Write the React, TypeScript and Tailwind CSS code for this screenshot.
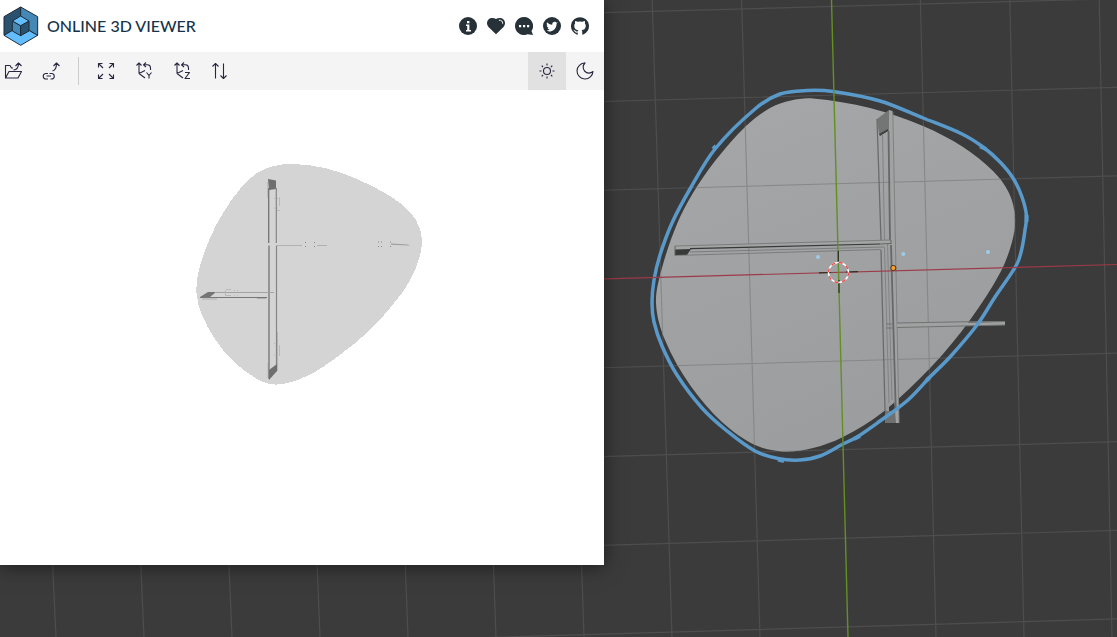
import React from "react";

type Point = [number, number];

/** Closed smooth curve through the given points, with handles scaled to each chord. */
function smooth(points: Point[]): string {
  const n = points.length;
  const at = (i: number) => points[(i + n) % n];
  const tangent = (i: number): Point => {
    const [a, c] = [at(i - 1), at(i + 1)];
    const length = Math.hypot(c[0] - a[0], c[1] - a[1]);
    return [(c[0] - a[0]) / length, (c[1] - a[1]) / length];
  };
  let d = `M${at(0)[0]} ${at(0)[1]}`;
  for (let i = 0; i < n; i++) {
    const [b, c] = [at(i), at(i + 1)];
    const [t, u] = [tangent(i), tangent(i + 1)];
    const h = Math.hypot(c[0] - b[0], c[1] - b[1]) / 3;
    d += `C${b[0] + t[0] * h} ${b[1] + t[1] * h} ${c[0] - u[0] * h} ${c[1] - u[1] * h} ${c[0]} ${c[1]}`;
  }
  return d + "Z";
}

const slab = smooth([
  [813, 98.5], [791, 100.5], [770, 108], [746, 126], [715, 161], [693, 193], [677, 224], [662, 268], [656, 303],
  [665, 340], [690, 385], [722, 422], [755, 445], [784, 451.5], [813, 448], [843, 437], [883, 412], [933, 365],
  [970, 320], [1000, 273], [1012, 242], [1015, 217], [1009, 193], [993, 171], [963, 147], [923, 126], [870, 108],
]);

const outline = smooth([
  [833, 91.5], [807, 90.5], [780, 94], [755, 109], [715, 149], [690, 189], [672, 223], [660, 255], [654, 280],
  [652, 303], [654, 322], [662, 346], [677, 375], [702, 408], [727, 431], [755, 451], [778, 458.5], [800, 460],
  [820, 456], [843, 444], [857, 437], [880, 421], [908, 400], [930, 377], [950, 357], [977, 325], [995, 297],
  [1017, 264], [1022, 248], [1025, 230], [1026.5, 216], [1022, 197], [1013, 178], [1000, 162], [983, 147],
  [962, 134], [923, 118], [880, 101],
]);

const model = smooth([
  [293, 164], [325, 168], [357, 179], [390, 196], [410, 212], [420, 229], [421.5, 247], [415, 270], [402, 293],
  [371, 329], [337, 357], [307, 376], [277, 384.5], [257, 379], [233, 361], [215, 339], [202, 315], [196.5, 293],
  [199, 270], [210, 238], [223, 213], [240, 189], [257, 173], [274, 166],
]);

const columns = [-9, -8, -7, -6, -5, -4, -3, -2, -1, 1, 2, 3];
const rows = [-3, -2, -1, 1, 2, 3, 4];

const gridPath =
  columns.map((i) => `M${831 + i * 89.4} 0L${848 + i * 88} 637`).join("") +
  rows.map((i) => `M0 ${296 + i * 89}L1117 ${264.5 + i * 88.6}`).join("");

function Viewport() {
  return (
    <svg
      className="absolute inset-0 h-full w-full"
      viewBox="0 0 1117 637"
      preserveAspectRatio="xMidYMid slice"
      role="img"
      aria-label="3D viewport"
    >
      <defs>
        <clipPath id="slab-clip">
          <path d={slab} />
        </clipPath>
        <linearGradient id="slab-fill" x1="0" y1="0" x2="0.4" y2="1">
          <stop offset="0" stopColor="#a6a7a8" />
          <stop offset="1" stopColor="#9c9d9e" />
        </linearGradient>
      </defs>
      <rect width="1117" height="637" fill="#3b3b3b" />
      <path d={gridPath} stroke="#4e4e4e" strokeWidth="1.2" fill="none" />
      <path d={slab} fill="url(#slab-fill)" />
      <path d={gridPath} stroke="#868788" strokeWidth="1.1" fill="none" clipPath="url(#slab-clip)" />

      {/* upright frame */}
      <path d="M877 119L889 110V131L879 134Z" fill="#747676" />
      <path d="M879 134L888 129V131L880 136Z" fill="#3d3f3f" />
      <path d="M885 411H897V423H885Z" fill="#6f7171" />
      <path d="M885.5 404L889 401V411H885.5ZM894 398L899 394V423H896Z" fill="#999b9b" />
      <path d="M889 110L892.5 111L899 423H896Z" fill="#a1a3a3" />
      <path d="M888.5 131L890 240M891 245L895.8 410" stroke="#676969" strokeWidth="1.8" fill="none" />
      <path d="M892.8 112L899 423" stroke="#808282" fill="none" />
      <path d="M877 119L881 240M881 250L885 410" stroke="#6a6c6c" strokeWidth="1.3" fill="none" />
      <path d="M882.5 134L884.5 240M884.5 247L889 403M887.5 244L892 400" stroke="#828484" fill="none" />

      {/* left arm */}
      <path d="M675 246L891 240V244L675 249.5Z" fill="#a3a4a4" />
      <path d="M675 249.5L691 249L687 255H675Z" fill="#383939" />
      <path d="M675 246L891 240M675 255.5L881 249.5M690 252L884 247" stroke="#7b7d7d" fill="none" />
      <path d="M690 248.7L880 244" stroke="#373939" strokeWidth="1.2" />
      <path d="M880 244L891 243.5M891 240V244M675 246V255.5" stroke="#636565" fill="none" />

      {/* right arm */}
      <path d="M897 323.5L1005 322V325L897 327.5Z" fill="#a0a1a1" />
      <path d="M897 323L980 321.5H1005M897 327.5L1005 325M886 324H893M886 328H893" stroke="#717373" fill="none" />

      <path d={outline} stroke="#5a9acb" strokeWidth="3.5" fill="none" strokeLinejoin="round" />
      <path
        d="M713 149L716 146M980 146.5L986 149M1026.5 215V222M778 459.5L784 461M854 439L860 436M926 381L930 377"
        stroke="#5a9acb"
        strokeWidth="4"
      />
      <path d="M0 296L1117 264.5" stroke="#9c3a49" strokeWidth="1.2" />
      <path d="M831.5 0L848 637" stroke="#638f25" strokeWidth="1.4" />

      {/* 3D cursor */}
      <path d="M819 272.8L831 272.5M846 272L858 271.6M838.3 251V264M839 280V293" stroke="#28301f" strokeWidth="1.2" />
      <circle cx="838.5" cy="272.5" r="10" fill="none" stroke="#ffffff" strokeWidth="1.4" />
      <circle cx="838.5" cy="272.5" r="10" fill="none" stroke="#f04747" strokeWidth="1.4" strokeDasharray="3.93 3.93" />
      <circle cx="893.3" cy="268" r="2.6" fill="#ffa02b" stroke="#40301a" />
      <g fill="#9ecbe8">
        <circle cx="818" cy="257" r="2" />
        <circle cx="903.3" cy="254" r="2" />
        <circle cx="988" cy="252" r="2" />
      </g>
    </svg>
  );
}

function ModelView() {
  return (
    <svg className="min-h-0 w-full flex-1" viewBox="0 90 604 475" role="img" aria-label="Loaded model">
      <path d={model} fill="#d4d4d4" shapeRendering="crispEdges" />
      <path d="M268 179L276 180.5V189L269 190Z" fill="#6f6f6f" />
      <path d="M267.5 182V198M268 363V378" stroke="#bdbdbd" />
      <path d="M268.7 188V243M269 245.5V379" stroke="#747474" strokeWidth="1.3" />
      <path d="M276.3 188V243M276.5 245.5V367" stroke="#858585" strokeWidth="1.2" />
      <path d="M277.5 332V371" stroke="#aaaaaa" strokeWidth="0.7" />
      <path d="M269 380V370L277 364V371Z" fill="#6f6f6f" />
      <path d="M200 297L208 292H216L210 297Z" fill="#747474" />
      <path d="M216 292.5H274" stroke="#a3a3a3" />
      <path d="M200 297.5H267" stroke="#777777" />
      <path d="M202 299H217M257 298.5H266" stroke="#aeaeae" />
      <path d="M277 245.5H302M317 245.5H327" stroke="#b0b0b0" />
      <path d="M391 243.5L408 244.5L410 245.5L391 244.8Z" fill="#9d9d9d" />
      <g stroke="#b2b2b2" strokeWidth="0.8" fill="none">
        <path d="M279.5 197V206M277 210.5H280M279.5 345V356M225.5 295V290M226 289.5H231M225 295.5H231" />
        <path d="M274 198.5h1M277 198.5h1M274 208h1M277 208h1M274 343.5h1M277 343.5h1M274 355h1M277 355h1" />
        <path d="M234 290.5h1M237 290.5h1M234 295h1M237 295h1" />
      </g>
      <path
        d="M305 242.5h1M314 242.5h1M305 246.5h1M314 246.5h1M378 242h1M381 242h1M390 242h1M378 246.5h1M381 246.5h1M390 246.5h1"
        stroke="#8c8c8c"
        fill="none"
      />
    </svg>
  );
}

function Logo() {
  return (
    <svg className="h-10 w-9 shrink-0" viewBox="9 18 108 120" aria-hidden="true">
      <g stroke="#1d2b38" strokeWidth="3" strokeLinejoin="round">
        <path d="M62 21L12 50V106L62 77Z" fill="#2a526e" />
        <path d="M62 21L113 50V106L62 77Z" fill="#4588b5" />
        <path d="M12 106L62 77L113 106L62 136Z" fill="#63bdff" />
        <path d="M37 63L62 77V107L37 93Z" fill="#4588b5" />
        <path d="M87 63L62 77V107L87 93Z" fill="#2a526e" />
        <path d="M62 48L87 63L62 77L37 63Z" fill="#63bdff" />
      </g>
    </svg>
  );
}

const links = [
  {
    label: "Information",
    art: (
      <>
        <circle cx="9" cy="9" r="9" />
        <path d="M8 4h2.4v2.3H8zM7 7.6h3.4v5.4H12v1.4H7V13h1.2V9H7z" fill="#fff" />
      </>
    ),
  },
  {
    label: "Donate",
    art: (
      <>
        <path d="M9 17.3L1.5 9.9C-.5 7.7-.5 4.4 1.5 2.4 3.6.4 7 .7 9 2 11 .7 14.4.4 16.5 2.4c2 2 2 5.3 0 7.5z" />
        <path d="M12.3 3.2c2-.4 3.5 1.1 3.4 3.1" fill="none" stroke="#fff" strokeWidth="1" strokeLinecap="round" />
      </>
    ),
  },
  {
    label: "Feedback",
    art: (
      <>
        <path d="M9 0a9 9 0 1 0 3.5 17.3L18 18l-1.5-4A9 9 0 0 0 9 0z" />
        <path d="M4 8h2.2v2.2H4zM8 8h2.2v2.2H8zM12 8h2.2v2.2H12z" fill="#fff" />
      </>
    ),
  },
  {
    label: "Twitter",
    art: (
      <>
        <circle cx="9" cy="9" r="9" />
        <path
          d="M14.8 5.3a5 5 0 0 1-1.2.4 2.5 2.5 0 0 0-4.4 2C7 7.6 5.4 6.6 4.1 5.2c-.8 1.3-.3 2.7.7 3.4L3.7 8.3c0 1.1.7 2.1 1.9 2.5l-1 .1c.3.9 1.2 1.6 2.3 1.6-1 .8-2.2 1-3.5.9 4.7 2.7 10.2-.3 10.2-6.8.5-.3.9-.8 1.2-1.3z"
          fill="#fff"
        />
      </>
    ),
  },
  {
    label: "GitHub",
    art: (
      <path d="M9 .2a9 9 0 0 0-2.85 17.54c.45.08.62-.2.62-.43v-1.7c-2.5.54-3.03-1.06-3.03-1.06-.41-1.04-1-1.32-1-1.32-.82-.56.06-.55.06-.55.9.06 1.38.93 1.38.93.8 1.38 2.1.98 2.62.75.08-.58.31-.98.57-1.2-2-.23-4.1-1-4.1-4.45 0-.98.35-1.79.93-2.42-.1-.22-.4-1.14.09-2.38 0 0 .75-.24 2.47.92a8.6 8.6 0 0 1 4.5 0c1.72-1.16 2.47-.92 2.47-.92.49 1.24.18 2.16.09 2.38.58.63.93 1.44.93 2.42 0 3.46-2.11 4.22-4.12 4.44.32.28.61.83.61 1.67v2.48c0 .24.16.52.62.43A9 9 0 0 0 9 .2z" />
    ),
  },
];

type Tool = { label: string; art: React.ReactNode; active?: boolean };

const coordinateArt = (
  <path d="M4 11.5V1M1.5 3.5L4 1L6.5 3.5M4 11.5L10 16M4 11.5L10 8.5M11 .5L8.5 2.8L11 5M8.7 2.8H12.5Q15.5 3 15.5 6V8" />
);

const fileTools: Tool[] = [
  {
    label: "Open file",
    art: <path d="M1.5 16V3.5H6L7.5 6H9M1.5 16L5 9.5H17.5L14 16ZM9.5 8Q14.5 7.5 14.5 1.5M11.5 4L14.5 1L17.5 4" />,
  },
  {
    label: "Open from URL",
    art: (
      <path d="M6 11.5H3.5a2.8 2.8 0 0 0 0 5.5H6M7.5 11.5H10a2.8 2.8 0 0 1 0 5.5H8.5M4.5 14H9M10.5 9Q14.5 8 14.5 1.5M11.5 4L14.5 1L17.5 4" />
    ),
  },
];

const viewTools: Tool[] = [
  {
    label: "Fit model to window",
    art: (
      <path d="M1.5 5.5V1.5H5.5M2 2L6 6M12.5 1.5H16.5V5.5M16 2L12 6M1.5 12.5V16.5H5.5M2 16L6 12M12.5 16.5H16.5V12.5M16 16L12 12" />
    ),
  },
  { label: "Set Y axis as up vector", art: <>{coordinateArt}<path d="M11.5 10.5L14 13.5L16.5 10.5M14 13.5V16.5" /></> },
  { label: "Set Z axis as up vector", art: <>{coordinateArt}<path d="M12 10.5H16.5L12 16.5H17" /></> },
  { label: "Flip up vector", art: <path d="M4.5 16.5V1.5M1.5 4.5L4.5 1.5L7.5 4.5M12.5 1.5V16.5M9.5 13.5L12.5 16.5L15.5 13.5" /> },
];

const themeTools: Tool[] = [
  {
    label: "Light mode",
    active: true,
    art: (
      <>
        <circle cx="9" cy="9" r="3.5" />
        <path d="M9 1.5V3.5M9 14.5V16.5M1.5 9H3.5M14.5 9H16.5M3.7 3.7L5 5M13 13L14.3 14.3M3.7 14.3L5 13M13 5L14.3 3.7" />
      </>
    ),
  },
  {
    label: "Dark mode",
    art: <path d="M9 1A8 8 0 1 0 17 9.5A5.2 5.2 0 0 1 9 1Z" />,
  },
];

function ToolButton({ label, art, active }: Tool) {
  return (
    <button
      type="button"
      aria-label={label}
      title={label}
      className={
        active
          ? "flex size-[38px] shrink-0 items-center justify-center bg-[#e1e1e1]"
          : "flex size-[38px] shrink-0 items-center justify-center hover:bg-[#e1e1e1]"
      }
    >
      <svg
        className="size-[18px]"
        viewBox="0 0 18 18"
        fill="none"
        stroke="#2a2640"
        strokeWidth="1.1"
        strokeLinejoin="round"
        aria-hidden="true"
      >
        {art}
      </svg>
    </button>
  );
}

export default function App() {
  return (
    <div className="relative grid h-screen grid-cols-[604fr_513fr] grid-rows-[565fr_72fr] overflow-hidden bg-[#3b3b3b]">
      <Viewport />
      <section className="relative flex min-h-0 flex-col bg-white shadow-[0_2px_18px_rgba(0,0,0,0.5)]">
        <header className="flex h-[52px] shrink-0 items-center justify-between pr-[15px] pl-[3px]">
          <a href="#home" className="flex items-center gap-2 text-[#15334a]">
            <Logo />
            <h1 className="font-['Lato','Liberation_Sans',sans-serif] text-[16px] leading-6 font-medium whitespace-nowrap">
              ONLINE 3D VIEWER
            </h1>
          </a>
          <nav aria-label="Links" className="flex gap-[10px]">
            {links.map((link) => (
              <a key={link.label} href={`#${link.label.toLowerCase()}`} aria-label={link.label}>
                <svg className="size-[18px]" viewBox="0 0 18 18" fill="#263238" aria-hidden="true">
                  {link.art}
                </svg>
              </a>
            ))}
          </nav>
        </header>
        <div role="toolbar" aria-label="Viewer tools" className="flex h-[38px] shrink-0 items-center overflow-hidden bg-[#f4f4f4]">
          <div className="-ml-1.5 flex">
            {fileTools.map((tool) => (
              <ToolButton key={tool.label} {...tool} />
            ))}
          </div>
          <div className="mx-2 h-7 w-px bg-[#cccccc]" />
          <div className="flex">
            {viewTools.map((tool) => (
              <ToolButton key={tool.label} {...tool} />
            ))}
          </div>
          <div className="ml-auto flex">
            {themeTools.map((tool) => (
              <ToolButton key={tool.label} {...tool} />
            ))}
          </div>
        </div>
        <ModelView />
      </section>
    </div>
  );
}
